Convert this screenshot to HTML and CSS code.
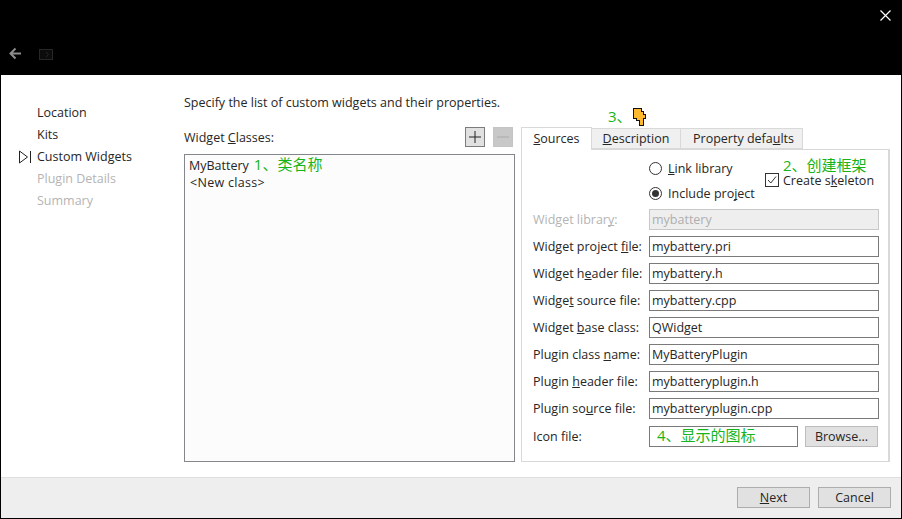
FILE: index.html
```html
<!DOCTYPE html>
<html lang="en">
<head>
  <meta charset="UTF-8">
  <title>Custom Widgets</title>
  <link rel="stylesheet" href="styles.css">
</head>
<body>
  <header class="titlebar">
    <div class="nav-icons">
      <svg class="back" width="14" height="14" viewBox="0 0 14 14"><path d="M6.5 1.5 1.5 6.5 6.5 11.5M2 6.5h10" fill="none" stroke="#8c8c8c" stroke-width="2"/></svg>
      <svg class="page" width="14" height="11" viewBox="0 0 14 11"><rect x="0.5" y="0.5" width="13" height="10" fill="#0c0c0c" stroke="#262626"/><path d="M7 3 9.5 5.5 7 8" fill="none" stroke="#262626"/></svg>
    </div>
    <svg class="close" width="11" height="11" viewBox="0 0 11 11"><path d="M0.5 0.5 10.5 10.5M10.5 0.5 0.5 10.5" stroke="#fff" stroke-width="1.2"/></svg>
  </header>

  <div class="content">
    <ul class="steps">
      <li>Location</li>
      <li>Kits</li>
      <li class="current">
        <svg class="marker" width="13" height="14" viewBox="0 0 13 14"><path d="M0.5 1 8.5 7 0.5 13Z" fill="none" stroke="#222"/><path d="M11.5 1V13" stroke="#222"/></svg>
        Custom Widgets
      </li>
      <li class="off">Plugin Details</li>
      <li class="off">Summary</li>
    </ul>

    <main class="page-main">
      <p class="intro">Specify the list of custom widgets and their properties.</p>
      <div class="columns">
        <section class="classes">
          <div class="classes-head">
            <span>Widget <u>C</u>lasses:</span>
            <button class="sq"><svg width="12" height="12" viewBox="0 0 12 12"><path d="M6 0V12M0 6H12" stroke="#222"/></svg></button>
            <button class="sq sq-off"><svg width="12" height="12" viewBox="0 0 12 12"><path d="M0 6H12" stroke="#aaa"/></svg></button>
          </div>
          <div class="class-list">
            <div>MyBattery<span class="note note-1">1、类名称</span></div>
            <div class="new-class">&lt;New class&gt;</div>
          </div>
        </section>

        <section class="tabs-wrap">
          <span class="note note-3">3、</span>
          <svg class="hand" width="14" height="18" viewBox="0 0 14 18" shape-rendering="crispEdges"><path d="M0.5 0.5H8.5V3.5H10.5V6.5H12.5V10.5H10.5V17.5H6.5V12.5H3.5V10.5H0.5Z" fill="#fdb92e" stroke="#111"/></svg>
          <div class="tabs">
            <div class="tab tab-on"><u>S</u>ources</div>
            <div class="tab"><u>D</u>escription</div>
            <div class="tab tab-last">Property defa<u>u</u>lts</div>
          </div>
          <div class="pane">
            <div class="options">
              <div class="radios">
                <div class="radio-row"><span class="radio"></span><span><u>L</u>ink library</span></div>
                <div class="radio-row"><span class="radio radio-on"></span><span>Include pro<u>j</u>ect</span></div>
              </div>
              <div class="skeleton">
                <span class="note note-2">2、创建框架</span>
                <div class="check-row">
                  <svg class="check" width="14" height="14" viewBox="0 0 14 14"><rect x="0.5" y="0.5" width="13" height="13" fill="#fff" stroke="#333"/><path d="M3 7 5.8 10 11 3.5" fill="none" stroke="#333"/></svg>
                  <span>Create s<u>k</u>eleton</span>
                </div>
              </div>
            </div>
            <div class="form">
              <label class="off">Widget librar<u>y</u>:</label><div class="field field-off">mybattery</div>
              <label>Widget project <u>f</u>ile:</label><div class="field">mybattery.pri</div>
              <label>Widget h<u>e</u>ader file:</label><div class="field">mybattery.h</div>
              <label>Widge<u>t</u> source file:</label><div class="field">mybattery.cpp</div>
              <label>Widget <u>b</u>ase class:</label><div class="field">QWidget</div>
              <label>Plugin class <u>n</u>ame:</label><div class="field">MyBatteryPlugin</div>
              <label>Plugin <u>h</u>eader file:</label><div class="field">mybatteryplugin.h</div>
              <label>Plugin so<u>u</u>rce file:</label><div class="field">mybatteryplugin.cpp</div>
              <label class="last-row">Icon file:</label>
              <div class="icon-row last-row">
                <div class="field field-note"><span class="note">4、显示的图标</span></div>
                <button class="btn btn-browse">Browse...</button>
              </div>
            </div>
          </div>
        </section>
      </div>
    </main>
  </div>

  <footer class="footer">
    <button class="btn btn-foot"><u>N</u>ext</button>
    <button class="btn btn-foot">Cancel</button>
  </footer>
</body>
</html>
```

FILE: styles.css
```css
* {
  box-sizing: border-box;
}
body {
  margin: 0;
  width: 902px;
  height: 519px;
  overflow: hidden;
  display: flex;
  flex-direction: column;
  background: #fff;
  border: solid #000;
  border-width: 0 1px 1px 1px;
  font-family: "Open Sans", "Noto Sans CJK SC", sans-serif;
  font-size: 12.5px;
  color: #262626;
}
u {
  text-decoration-skip-ink: none;
  text-underline-offset: 1px;
}
.titlebar {
  height: 75px;
  flex: none;
  margin: 0 -1px;
  background: #000;
  display: flex;
  justify-content: space-between;
}
.nav-icons {
  display: flex;
  gap: 16px;
  padding: 47px 0 0 9px;
  height: 75px;
}
.page {
  margin-top: 2px;
}
.close {
  margin: 10px 11px 0 0;
}
.content {
  flex: 1;
  display: flex;
  min-height: 0;
}
.steps {
  list-style: none;
  margin: 0;
  padding: 27px 0 0 36px;
  width: 183px;
  flex: none;
  position: relative;
}
.steps li {
  height: 22px;
  line-height: 22px;
}
.steps .off, label.off {
  color: #b4b4b4;
}
.marker {
  position: absolute;
  left: 18px;
  margin-top: 4px;
}
.page-main {
  flex: 1;
}
.intro {
  margin: 0;
  padding-top: 19px;
  height: 52px;
  line-height: 18px;
}
.columns {
  display: flex;
  gap: 6px;
  align-items: flex-start;
}
.classes {
  width: 331px;
}
.classes-head {
  display: flex;
  align-items: flex-start;
  gap: 8px;
  height: 27px;
  padding-right: 2px;
}
.classes-head span {
  flex: 1;
  line-height: 22px;
}
.sq {
  width: 20px;
  height: 20px;
  padding: 0;
  background: #e1e1e1;
  border: 1px solid #7c7c7c;
  display: flex;
  align-items: center;
  justify-content: center;
}
.sq-off {
  background: #c8c8c8;
  border-color: #c4c4c4;
}
.class-list {
  height: 308px;
  background: #fcfcfc;
  border: 1px solid #85858c;
  padding: 2px 4px;
  line-height: 17px;
}
.new-class {
  letter-spacing: 0.3px;
  padding-left: 1px;
}
.note {
  color: #16b416;
  font-size: 15px;
  line-height: 1;
}
.note-1 {
  margin-left: 5px;
}
.tabs-wrap {
  width: 369px;
  position: relative;
}
.note-3 {
  position: absolute;
  left: 87px;
  top: -18px;
}
.hand {
  position: absolute;
  left: 112px;
  top: -19px;
}
.tabs {
  display: flex;
  align-items: flex-end;
  height: 22px;
  position: relative;
  z-index: 1;
}
.tab {
  height: 21px;
  line-height: 19px;
  width: 89px;
  text-align: center;
  background: #f0f0f0;
  border: 1px solid #d9d9d9;
  border-left: 0;
}
.tab-last {
  width: 122px;
  text-align: left;
  padding-left: 12px;
}
.tab-on {
  width: 71px;
  height: 23px;
  line-height: 21px;
  margin-bottom: -1px;
  background: #fff;
  border-left: 1px solid #d9d9d9;
  border-bottom: 0;
}
.pane {
  height: 313px;
  border: 1px solid #d9d9d9;
  border-right-width: 2px;
  padding: 6px 10px 0 11px;
}
.options {
  display: flex;
  height: 53px;
  padding-left: 116px;
}
.radios {
  width: 116px;
}
.radio-row {
  display: flex;
  align-items: center;
  gap: 6px;
  height: 25px;
}
.radio {
  width: 13px;
  height: 13px;
  border: 1px solid #333;
  border-radius: 50%;
  background: #fff;
  display: flex;
  align-items: center;
  justify-content: center;
}
.radio-on::after {
  content: "";
  width: 7px;
  height: 7px;
  border-radius: 50%;
  background: #333;
}
.skeleton {
  position: relative;
  padding-top: 15px;
}
.check-row {
  display: flex;
  align-items: center;
  gap: 4px;
  height: 18px;
}
.note-2 {
  position: absolute;
  left: 18px;
  top: 2px;
  white-space: nowrap;
}
.form {
  display: grid;
  grid-template-columns: 116px 230px;
  grid-auto-rows: 22px;
  row-gap: 5px;
  align-items: start;
}
.form label {
  line-height: 21px;
}
.last-row {
  margin-top: 1px;
}
.field {
  height: 21px;
  line-height: 19px;
  border: 1px solid #7a7a7a;
  padding: 0 2px;
  background: #fff;
  white-space: nowrap;
}
.field-off {
  background: #eee;
  border-color: #c8c8c8;
  color: #aeaeae;
}
.icon-row {
  display: flex;
  justify-content: space-between;
}
.field-note {
  width: 149px;
  padding-left: 7px;
}
.btn {
  background: #e1e1e1;
  border: 1px solid #bdbdbd;
  font: inherit;
  color: #262626;
  padding: 0;
}
.btn-browse {
  width: 73px;
  height: 21px;
  margin-right: 1px;
}
.footer {
  height: 41px;
  flex: none;
  background: #eee;
  border-top: 1px solid #dfdfdf;
  display: flex;
  justify-content: flex-end;
  align-items: flex-start;
  gap: 8px;
  padding: 9px 10px 0 0;
}
.btn-foot {
  width: 73px;
  height: 21px;
  border-color: #adadad;
}
```
